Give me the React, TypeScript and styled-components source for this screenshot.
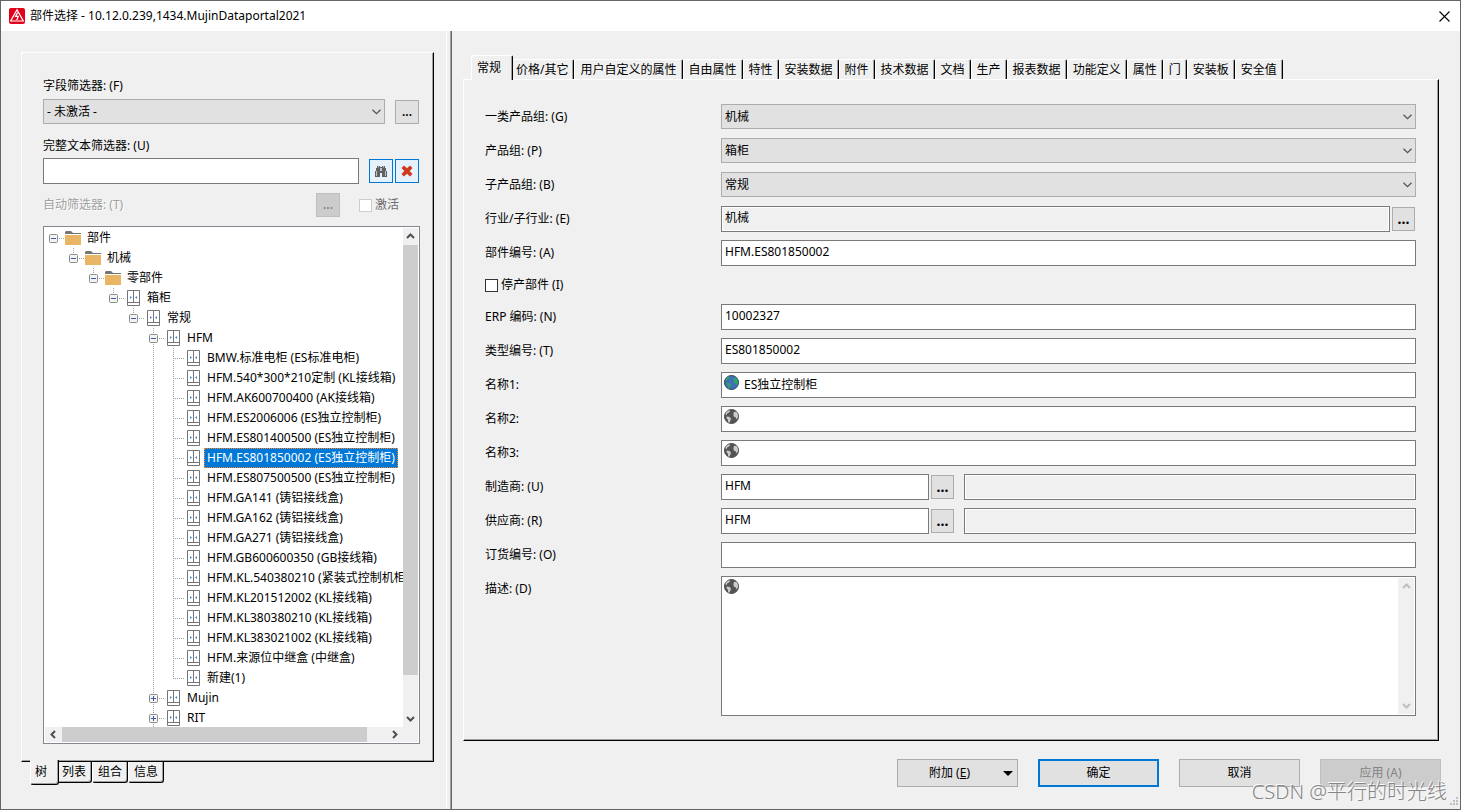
import React from "react";
import styled, { createGlobalStyle, css } from "styled-components";

const GlobalStyle = createGlobalStyle`
  *, *::before, *::after { box-sizing: border-box; }
  body {
    margin: 0;
    background: #f0f0f0;
    color: #000;
    font-family: "Noto Sans", "Noto Sans CJK SC", sans-serif;
    font-size: 12px;
    line-height: 16px;
  }
  button, input, select, textarea {
    font: inherit;
    color: inherit;
    margin: 0;
    padding: 0;
    border-radius: 0;
    outline: none;
  }
`;

/* ---------- window ---------- */

const Window = styled.div`
  position: relative;
  display: flex;
  flex-direction: column;
  height: 100vh;
  min-height: 700px;
  min-width: 1320px;
  border: 1px solid #666;
`;

const TitleBar = styled.header`
  display: flex;
  align-items: center;
  flex: none;
  height: 30px;
  padding: 0 10px 0 8px;
  gap: 5px;
  background: #fff;
`;

const Title = styled.h1`
  flex: 1;
  margin: 0;
  font-size: 12px;
  font-weight: 400;
`;

const CloseButton = styled.button`
  display: flex;
  border: 0;
  background: none;
`;

const Body = styled.div`
  display: flex;
  flex: 1;
  min-height: 0;
`;

const LeftPane = styled.aside`
  display: flex;
  flex-direction: column;
  flex: none;
  width: 445px;
  padding: 21px 12px 24px 20px;
`;

const Splitter = styled.div`
  flex: none;
  width: 6px;
  border-left: 1px solid #fff;
  border-right: 1px solid #696969;
  box-shadow: inset -1px 0 0 #a0a0a0;
`;

const RightPane = styled.main`
  display: flex;
  flex-direction: column;
  flex: 1;
  min-width: 0;
  padding: 24px 0 22px 11px;
`;

/* ---------- panels and tabs ---------- */

const Panel = styled.section<{ $pad: string }>`
  display: flex;
  flex-direction: column;
  flex: 1;
  min-height: 0;
  padding: ${(p) => p.$pad};
  border: 1px solid #fff;
  border-right-color: #000;
  border-bottom-color: #000;
  box-shadow: inset -1px -1px 0 #a0a0a0;
`;

const TabStrip = styled.div<{ $bottom?: boolean }>`
  display: flex;
  flex: none;
  white-space: nowrap;
  ${(p) =>
    p.$bottom
      ? css`
          align-items: flex-start;
          height: 23px;
          padding-left: 11px;
        `
      : css`
          align-items: flex-end;
          height: 24px;
          padding-left: 10px;
        `}
`;

const Tab = styled.button<{ $active?: boolean; $bottom?: boolean }>`
  position: relative;
  height: ${(p) => (p.$active ? 25 : p.$bottom ? 21 : 20)}px;
  padding: 0 5px;
  border: 1px solid #fff;
  border-right-color: #000;
  background: #f0f0f0;
  ${(p) =>
    p.$bottom
      ? css`
          border-top: 0;
          border-bottom-color: #000;
          border-radius: 0 0 3px 3px;
          box-shadow: inset -1px -1px 0 #a0a0a0;
        `
      : css`
          border-bottom: 0;
          border-radius: 3px 2px 0 0;
          box-shadow: inset -1px 0 0 #a0a0a0;
        `}
  ${(p) =>
    p.$active &&
    (p.$bottom
      ? css`
          z-index: 1;
          padding: 0 11px 0 4px;
          margin: -2px -3px 0 -2px;
        `
      : css`
          z-index: 1;
          padding: 0 11px 0 5px;
          margin: 0 -3px -1px -2px;
        `)}
`;

/* ---------- controls ---------- */

const SelectBox = styled.div`
  position: relative;
  flex: 1;
  min-width: 0;
  height: 25px;
  svg {
    position: absolute;
    top: 10px;
    right: 4px;
    pointer-events: none;
  }
`;

const Select = styled.select`
  display: block;
  appearance: none;
  width: 100%;
  height: 100%;
  padding: 0 20px 0 3px;
  border: 1px solid #adadad;
  background: #e1e1e1;
`;

const Frame = styled.div<{ $readOnly?: boolean; $width?: number; $tall?: boolean }>`
  display: flex;
  align-items: flex-start;
  min-width: 0;
  flex: ${(p) => (p.$width ? `0 0 ${p.$width}px` : "1")};
  height: ${(p) => (p.$tall ? "100%" : "26px")};
  padding: 1px;
  border: 1px solid #7a7a7a;
  background: ${(p) => (p.$readOnly ? "#f0f0f0" : "#fff")};
  ${(p) => p.$readOnly && css`box-shadow: inset 0 0 0 1px #fff;`}
  > svg {
    flex: none;
    margin: 1px 3px 0 1px;
  }
`;

const TextInput = styled.input<{ $beside?: boolean }>`
  flex: 1;
  min-width: 0;
  height: ${(p) => (p.$beside ? 20 : 18)}px;
  padding: 0 2px;
  border: 0;
  background: none;
`;

const TextArea = styled.textarea`
  flex: 1;
  min-width: 0;
  height: 100%;
  padding: 2px;
  border: 0;
  background: none;
  resize: none;
`;

const SmallButton = styled.button<{ $accent?: boolean; $narrow?: boolean }>`
  display: flex;
  align-items: center;
  justify-content: center;
  flex: none;
  width: ${(p) => (p.$narrow ? 23 : 24)}px;
  height: 24px;
  border: 1px solid ${(p) => (p.$accent ? "#0078d7" : "#adadad")};
  background: ${(p) => (p.$accent ? "#e5f1fb" : "#e1e1e1")};
  font-size: ${(p) => (p.$narrow ? 14 : 12)}px;
  font-weight: ${(p) => (p.$narrow ? 700 : 600)};
  &:disabled {
    border-color: #bfbfbf;
    background: #ccc;
    color: #838383;
  }
`;

const CheckBox = styled.input`
  appearance: none;
  flex: none;
  width: 13px;
  height: 13px;
  border: 1px solid #333;
  background: #fff;
  &:disabled {
    border-color: #ccc;
  }
`;

/* ---------- filters ---------- */

const FilterLabel = styled.label`
  height: 18px;
  line-height: 18px;
`;

const MutedLabel = styled.label`
  flex: 1;
  color: #a0a0a0;
  text-shadow: 1px 1px 0 #fff;
`;

const FilterRow = styled.div<{ $top: number; $bottom: number }>`
  display: flex;
  align-items: center;
  margin: ${(p) => p.$top}px 1px ${(p) => p.$bottom}px 0;
  gap: 10px;
`;

const ButtonPair = styled.div`
  display: flex;
  gap: 2px;
`;

const InlineCheck = styled.label<{ $muted?: boolean }>`
  display: flex;
  align-items: center;
  gap: 3px;
  height: ${(p) => (p.$muted ? 24 : 22)}px;
  ${(p) =>
    p.$muted &&
    css`
      padding: 0 20px 0 9px;
      color: #6d6d6d;
    `}
`;

/* ---------- tree ---------- */

const TreeBox = styled.div`
  display: grid;
  grid-template-columns: minmax(0, 1fr) 15px;
  grid-template-rows: minmax(0, 1fr) 15px;
  flex: 1;
  min-height: 0;
  padding: 1px;
  border: 1px solid #828790;
  background: #fff;
`;

const TreeView = styled.ul`
  margin: 0;
  padding: 0;
  overflow: hidden;
  list-style: none;
`;

const TreeRow = styled.li`
  display: flex;
  height: 20px;
  white-space: nowrap;
`;

const Guide = styled.svg`
  flex: none;
`;

const IconCell = styled.span`
  display: flex;
  align-items: center;
  flex: none;
  width: 19px;
`;

const NodeLabel = styled.span<{ $selected?: boolean }>`
  padding: 0 3px;
  line-height: 20px;
  ${(p) =>
    p.$selected &&
    css`
      background: #0078d7;
      color: #fff;
      outline: 1px dotted #ff8728;
      outline-offset: -1px;
    `}
`;

const ScrollBar = styled.div<{ $horizontal?: boolean; $width?: number }>`
  display: flex;
  flex: none;
  flex-direction: ${(p) => (p.$horizontal ? "row" : "column")};
  ${(p) => p.$width && css`width: ${p.$width}px; height: 100%;`}
  background: #f0f0f0;
`;

const ScrollArrow = styled.button`
  display: flex;
  align-items: center;
  justify-content: center;
  flex: 0 0 17px;
  border: 0;
  background: none;
`;

const Thumb = styled.div<{ $share: number }>`
  flex: ${(p) => p.$share} 1 0;
  background: #cdcdcd;
`;

const Track = styled.div<{ $share: number }>`
  flex: ${(p) => p.$share} 1 0;
`;

const ScrollCorner = styled.div`
  background: #f0f0f0;
`;

/* ---------- form ---------- */

const Form = styled.form`
  display: flex;
  flex-direction: column;
  flex: 1;
  min-height: 0;
  gap: 8px;
`;

const FormRow = styled.div<{ $grow?: boolean }>`
  display: flex;
  flex: ${(p) => (p.$grow ? "1" : "none")};
  min-height: 26px;
`;

const FormLabel = styled.label`
  flex: 0 0 236px;
  height: 26px;
  line-height: 26px;
`;

const Gap = styled.div<{ $size: number; $end?: number }>`
  display: flex;
  align-items: center;
  padding: 0 ${(p) => p.$end ?? 0}px 0 ${(p) => p.$size}px;
`;

const RightBody = styled.div`
  display: flex;
  flex: 1;
  min-height: 0;
  padding-right: 21px;
`;

const Footer = styled.footer`
  display: flex;
  flex: none;
  justify-content: flex-end;
  gap: 20px;
  padding: 18px 19px 0 0;
`;

const CommandButton = styled.button<{ $primary?: boolean }>`
  display: flex;
  align-items: center;
  justify-content: center;
  position: relative;
  width: 121px;
  height: 28px;
  border: ${(p) => (p.$primary ? "2px solid #0078d7" : "1px solid #adadad")};
  background: #e1e1e1;
  &:disabled {
    border-color: #bfbfbf;
    background: #ccc;
    color: #838383;
  }
`;

const CommandText = styled.span<{ $menu?: boolean }>`
  padding-right: ${(p) => (p.$menu ? 16 : 0)}px;
`;

const MenuArrow = styled.svg`
  position: absolute;
  right: 4px;
  top: 11px;
`;

const Watermark = styled.div`
  position: absolute;
  right: 13px;
  bottom: 3px;
  color: #858585;
  font-size: 20px;
  font-weight: 300;
  line-height: 28px;
  text-shadow: -1px -1px 0 #fafafa;
  pointer-events: none;
`;

const Grip = styled.svg`
  position: absolute;
  right: 2px;
  bottom: 3px;
`;

/* ---------- drawings ---------- */

const AppIcon = () => (
  <svg width="16" height="16" viewBox="0 0 16 16" aria-hidden="true">
    <rect width="16" height="16" rx="2" fill="#e2001a" />
    <path d="M8 1.8 14.3 13H1.7Z" fill="none" stroke="#fff" strokeWidth="1.2" />
    <path d="M8.6 4.5 6.6 8.4H9.2L7.8 12" fill="none" stroke="#fff" strokeWidth="1.3" />
  </svg>
);

const CloseIcon = () => (
  <svg width="11" height="11" viewBox="0 0 11 11" aria-hidden="true">
    <path d="M.5.5 10.5 10.5M10.5.5.5 10.5" stroke="#000" strokeWidth="1.1" />
  </svg>
);

const ComboArrow = () => (
  <svg width="9" height="6" viewBox="0 0 9 6" aria-hidden="true">
    <path d="M.5.7 4.5 4.7 8.5.7" fill="none" stroke="#555" strokeWidth="1.3" />
  </svg>
);

const arrowPaths = {
  up: "M1 6 4.5 2.5 8 6",
  down: "M1 3 4.5 6.5 8 3",
  left: "M6 1 2.5 4.5 6 8",
  right: "M3 1 6.5 4.5 3 8",
};

const Arrow = ({ dir, color = "#505050" }: { dir: keyof typeof arrowPaths; color?: string }) => (
  <svg width="9" height="9" viewBox="0 0 9 9" aria-hidden="true">
    <path d={arrowPaths[dir]} fill="none" stroke={color} strokeWidth="2" />
  </svg>
);

const Binoculars = () => (
  <svg width="12" height="12" viewBox="0 0 12 12" aria-hidden="true">
    <path
      d="M2 1H5V2H7V1H10V3H11V6H12V12H7V8H5V12H0V6H1V3H2Z"
      fill="#606060"
    />
    <path d="M3.5 1V2.5M8.5 1V2.5M5.5 3V6M6.5 3V6M1.5 6V11M10.5 6V11" stroke="#e5f1fb" strokeWidth="0.7" />
  </svg>
);

const RedCross = () => (
  <svg width="12" height="12" viewBox="0 0 12 12" aria-hidden="true">
    <path d="M3 0.5 6 3.3 9 .5 11.5 3 8.7 6 11.5 9 9 11.5 6 8.7 3 11.5.5 9 3.3 6 .5 3Z" fill="#cf3a1f" />
  </svg>
);

const FolderIcon = () => (
  <svg width="16" height="16" viewBox="0 0 16 16" aria-hidden="true">
    <path d="M0 4V2L1 1H6L8 3H16V4Z" fill="#757575" />
    <rect y="5" width="16" height="10" fill="#e9b666" />
  </svg>
);

const CabinetIcon = () => (
  <svg width="15" height="16" viewBox="0 0 15 16" aria-hidden="true">
    <path d="M2.5.5H14.5V15.5H2.5ZM2.5 12.5H14.5M8.5.5V12.5" fill="#fff" stroke="#757575" />
    <path d="M5 6V9L7 7.5ZM12 6V9L10 7.5Z" fill="#4a86c5" />
  </svg>
);

const Globe = ({ color }: { color?: boolean }) => (
  <svg width="15" height="15" viewBox="0 0 15 15" aria-hidden="true">
    <circle cx="7.5" cy="7.5" r="7" fill={color ? "#3f6fb5" : "#555"} stroke={color ? "#2b3f55" : "#4a4a4a"} />
    <g fill={color ? "#2fa36b" : "#ccc"}>
      <path d="M1.3 5.2 2.6 2.8 5.2 1.3 6.2 2 5 3.4 3.6 4 2.6 6Z" />
      <path d="M2.6 7.6 5 7.8 7 9.2 6.4 11.4 5.4 13.8 4.2 13.2 3.8 10.6 2.6 9.2Z" />
      <path d="M10 3 12.4 2.8 13.8 5 14 8 12.8 10.6 11.6 8.2 9.8 7.4 9.4 5Z" />
    </g>
  </svg>
);

/* ---------- tree data ---------- */

type Sign = "minus" | "plus" | null;

interface TreeNode {
  level: number;
  text: string;
  sign: Sign;
  folder?: boolean;
  last?: boolean;
  selected?: boolean;
}

const leafTexts = [
  "BMW.标准电柜 (ES标准电柜)",
  "HFM.540*300*210定制 (KL接线箱)",
  "HFM.AK600700400 (AK接线箱)",
  "HFM.ES2006006 (ES独立控制柜)",
  "HFM.ES801400500 (ES独立控制柜)",
  "HFM.ES801850002 (ES独立控制柜)",
  "HFM.ES807500500 (ES独立控制柜)",
  "HFM.GA141 (铸铝接线盒)",
  "HFM.GA162 (铸铝接线盒)",
  "HFM.GA271 (铸铝接线盒)",
  "HFM.GB600600350 (GB接线箱)",
  "HFM.KL.540380210 (紧装式控制机柜)",
  "HFM.KL201512002 (KL接线箱)",
  "HFM.KL380380210 (KL接线箱)",
  "HFM.KL383021002 (KL接线箱)",
  "HFM.来源位中继盒 (中继盒)",
  "新建(1)",
];

const nodes: TreeNode[] = [
  { level: 0, text: "部件", sign: "minus", folder: true, last: true },
  { level: 1, text: "机械", sign: "minus", folder: true, last: true },
  { level: 2, text: "零部件", sign: "minus", folder: true, last: true },
  { level: 3, text: "箱柜", sign: "minus", last: true },
  { level: 4, text: "常规", sign: "minus", last: true },
  { level: 5, text: "HFM", sign: "minus" },
  ...leafTexts.map((text, i) => ({
    level: 6,
    text,
    sign: null,
    last: i === leafTexts.length - 1,
    selected: i === 5,
  })),
  { level: 5, text: "Mujin", sign: "plus" },
  { level: 5, text: "RIT", sign: "plus" },
];

const dots = { stroke: "#a0a0a0", strokeWidth: 1, strokeDasharray: "1 1" };

/* Dotted connector lines and the expander box left of a node's icon. */
const NodeGuide = ({ node }: { node: TreeNode }) => {
  const width = (node.level + 1) * 20;
  const x = node.level * 20 + 8;
  return (
    <Guide width={width} height="20" viewBox={`0 0 ${width} 20`} aria-hidden="true">
      {node.level === 6 && <path d={`M${x - 19.5} 0V20`} {...dots} />}
      {node.level > 0 && <path d={`M${x + 0.5} 0V10`} {...dots} />}
      {!node.last && <path d={`M${x + 0.5} 10V20`} {...dots} />}
      <path d={`M${x} 10.5H${x + 11}`} {...dots} />
      {node.sign && (
        <>
          <rect x={x - 3.5} y="6.5" width="8" height="8" rx="1" fill="#f4f4f4" stroke="#8c8c8c" />
          <path d={`M${x - 2} 10.5H${x + 3}`} stroke="#3c5aa6" />
          {node.sign === "plus" && <path d={`M${x + 0.5} 8V13`} stroke="#3c5aa6" />}
        </>
      )}
    </Guide>
  );
};

const pageTabs = [
  "常规", "价格/其它", "用户自定义的属性", "自由属性", "特性", "安装数据", "附件", "技术数据",
  "文档", "生产", "报表数据", "功能定义", "属性", "门", "安装板", "安全值",
];

/* ---------- form parts ---------- */

const ComboRow = ({ id, label, value }: { id: string; label: string; value: string }) => (
  <FormRow>
    <FormLabel htmlFor={id}>{label}</FormLabel>
    <SelectBox>
      <Select id={id} defaultValue={value}>
        <option>{value}</option>
      </Select>
      <ComboArrow />
    </SelectBox>
  </FormRow>
);

const TextRow = ({ id, label, value = "", globe }: { id: string; label: string; value?: string; globe?: "color" | "gray" }) => (
  <FormRow>
    <FormLabel htmlFor={id}>{label}</FormLabel>
    <Frame>
      {globe && <Globe color={globe === "color"} />}
      <TextInput id={id} defaultValue={value} $beside={!!globe} />
    </Frame>
  </FormRow>
);

const CompanyRow = ({ id, label, value }: { id: string; label: string; value: string }) => (
  <FormRow>
    <FormLabel htmlFor={id}>{label}</FormLabel>
    <Frame $width={208}>
      <TextInput id={id} defaultValue={value} />
    </Frame>
    <Gap $size={2} $end={10}>
      <SmallButton type="button" $narrow>...</SmallButton>
    </Gap>
    <Frame $readOnly>
      <TextInput readOnly aria-label={`${label} 名称`} />
    </Frame>
  </FormRow>
);

export default function App() {
  return (
    <>
      <GlobalStyle />
      <Window>
        <TitleBar>
          <AppIcon />
          <Title>部件选择 - 10.12.0.239,1434.MujinDataportal2021</Title>
          <CloseButton aria-label="关闭">
            <CloseIcon />
          </CloseButton>
        </TitleBar>

        <Body>
          <LeftPane>
            <Panel $pad="24px 13px 17px 21px">
              <FilterLabel htmlFor="field-filter">字段筛选器: (F)</FilterLabel>
              <FilterRow $top={4} $bottom={13}>
                <SelectBox>
                  <Select id="field-filter" defaultValue="- 未激活 -">
                    <option>- 未激活 -</option>
                  </Select>
                  <ComboArrow />
                </SelectBox>
                <SmallButton>...</SmallButton>
              </FilterRow>

              <FilterLabel htmlFor="text-filter">完整文本筛选器: (U)</FilterLabel>
              <FilterRow $top={3} $bottom={9}>
                <Frame>
                  <TextInput id="text-filter" />
                </Frame>
                <ButtonPair>
                  <SmallButton $accent aria-label="查找">
                    <Binoculars />
                  </SmallButton>
                  <SmallButton $accent aria-label="清除">
                    <RedCross />
                  </SmallButton>
                </ButtonPair>
              </FilterRow>

              <FilterRow $top={0} $bottom={9}>
                <MutedLabel htmlFor="auto-filter">自动筛选器: (T)</MutedLabel>
                <SmallButton id="auto-filter" disabled>...</SmallButton>
                <InlineCheck $muted>
                  <CheckBox type="checkbox" disabled />
                  激活
                </InlineCheck>
              </FilterRow>

              <TreeBox>
                <TreeView role="tree">
                  {nodes.map((node) => (
                    <TreeRow key={node.text} role="treeitem" aria-level={node.level + 1} aria-selected={!!node.selected}>
                      <NodeGuide node={node} />
                      <IconCell>{node.folder ? <FolderIcon /> : <CabinetIcon />}</IconCell>
                      <NodeLabel $selected={node.selected}>{node.text}</NodeLabel>
                    </TreeRow>
                  ))}
                </TreeView>
                <ScrollBar>
                  <ScrollArrow aria-label="向上"><Arrow dir="up" /></ScrollArrow>
                  <Thumb $share={430} />
                  <Track $share={35} />
                  <ScrollArrow aria-label="向下"><Arrow dir="down" /></ScrollArrow>
                </ScrollBar>
                <ScrollBar $horizontal>
                  <ScrollArrow aria-label="向左"><Arrow dir="left" /></ScrollArrow>
                  <Thumb $share={305} />
                  <Track $share={19} />
                  <ScrollArrow aria-label="向右"><Arrow dir="right" /></ScrollArrow>
                </ScrollBar>
                <ScrollCorner />
              </TreeBox>
            </Panel>
            <TabStrip $bottom role="tablist">
              {["树", "列表", "组合", "信息"].map((text, i) => (
                <Tab key={text} role="tab" aria-selected={i === 0} $bottom $active={i === 0}>
                  {text}
                </Tab>
              ))}
            </TabStrip>
          </LeftPane>

          <Splitter />

          <RightPane>
            <TabStrip role="tablist">
              {pageTabs.map((text, i) => (
                <Tab key={text} role="tab" aria-selected={i === 0} $active={i === 0}>
                  {text}
                </Tab>
              ))}
            </TabStrip>
            <RightBody>
              <Panel $pad="24px 22px 24px 21px">
                <Form>
                  <ComboRow id="group-main" label="一类产品组: (G)" value="机械" />
                  <ComboRow id="group" label="产品组: (P)" value="箱柜" />
                  <ComboRow id="group-sub" label="子产品组: (B)" value="常规" />
                  <FormRow>
                    <FormLabel htmlFor="trade">行业/子行业: (E)</FormLabel>
                    <Frame $readOnly>
                      <TextInput id="trade" readOnly defaultValue="机械" />
                    </Frame>
                    <Gap $size={2} $end={1}>
                      <SmallButton type="button" $narrow>...</SmallButton>
                    </Gap>
                  </FormRow>
                  <TextRow id="part-number" label="部件编号: (A)" value="HFM.ES801850002" />
                  <InlineCheck>
                    <CheckBox type="checkbox" />
                    停产部件 (I)
                  </InlineCheck>
                  <TextRow id="erp" label="ERP 编码: (N)" value="10002327" />
                  <TextRow id="type-number" label="类型编号: (T)" value="ES801850002" />
                  <TextRow id="name-1" label="名称1:" value="ES独立控制柜" globe="color" />
                  <TextRow id="name-2" label="名称2:" globe="gray" />
                  <TextRow id="name-3" label="名称3:" globe="gray" />
                  <CompanyRow id="manufacturer" label="制造商: (U)" value="HFM" />
                  <CompanyRow id="supplier" label="供应商: (R)" value="HFM" />
                  <TextRow id="order-number" label="订货编号: (O)" />
                  <FormRow $grow>
                    <FormLabel htmlFor="description">描述: (D)</FormLabel>
                    <Frame $tall>
                      <Globe />
                      <TextArea id="description" />
                      <ScrollBar $width={16}>
                        <ScrollArrow type="button" aria-label="向上"><Arrow dir="up" color="#bfbfbf" /></ScrollArrow>
                        <Track $share={1} />
                        <ScrollArrow type="button" aria-label="向下"><Arrow dir="down" color="#bfbfbf" /></ScrollArrow>
                      </ScrollBar>
                    </Frame>
                  </FormRow>
                </Form>
              </Panel>
            </RightBody>
            <Footer>
              <CommandButton>
                <CommandText $menu>附加 (<u>E</u>)</CommandText>
                <MenuArrow width="10" height="5" viewBox="0 0 10 5" aria-hidden="true">
                  <path d="M0 0H10L5 5Z" />
                </MenuArrow>
              </CommandButton>
              <CommandButton $primary>确定</CommandButton>
              <CommandButton>取消</CommandButton>
              <CommandButton disabled>应用 (A)</CommandButton>
            </Footer>
          </RightPane>
        </Body>

        <Watermark>CSDN @平行的时光线</Watermark>
        <Grip width="9" height="9" viewBox="0 0 9 9" fill="#bfbfbf" aria-hidden="true">
          <path d="M7 0H9V2H7ZM4 3H6V5H4ZM7 3H9V5H7ZM1 6H3V8H1ZM4 6H6V8H4ZM7 6H9V8H7Z" />
        </Grip>
      </Window>
    </>
  );
}
